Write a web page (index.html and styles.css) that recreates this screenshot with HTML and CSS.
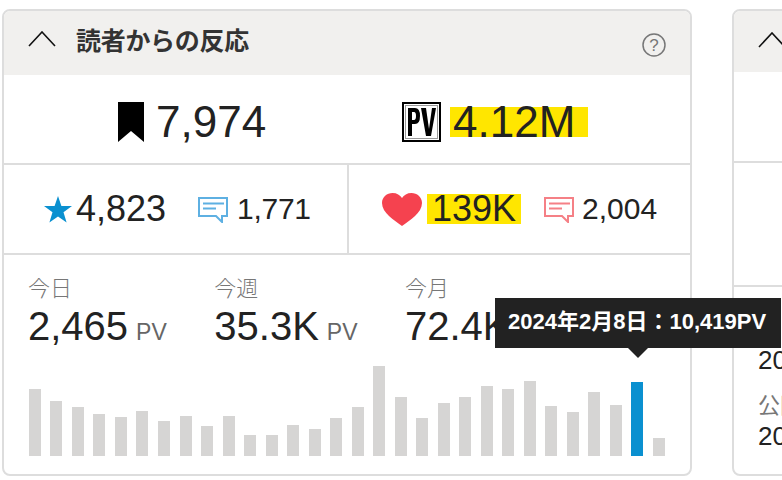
FILE: index.html
```html
<!DOCTYPE html>
<html lang="ja">
<head>
<meta charset="utf-8">
<title>読者からの反応</title>
<link rel="stylesheet" href="styles.css">
</head>
<body>
<div class="page">
  <section class="card">
    <header class="head">
      <svg class="chev" width="28" height="16" viewBox="0 0 28 16"><path d="M1 15 14 1l13 14" fill="none" stroke="#111" stroke-width="1.6"/></svg>
      <h2 class="title">読者からの反応</h2>
      <svg class="help" width="24" height="24" viewBox="0 0 24 24"><circle cx="12" cy="12" r="11" fill="none" stroke="#777" stroke-width="1.5"/><text x="12" y="18" text-anchor="middle" class="help-q">?</text></svg>
    </header>
    <div class="row-main">
      <div class="group">
        <svg width="26" height="40" viewBox="0 0 26 40"><path d="M0 0h26v40L13 29 0 40z" fill="#000"/></svg>
        <span class="num-xl">7,974</span>
      </div>
      <div class="group group-pv">
        <svg class="pv" width="39" height="40" viewBox="0 0 39 40"><rect x="1" y="1" width="37" height="38" fill="#fff" stroke="#000" stroke-width="2"/><rect x="3.5" y="3.5" width="32" height="33" fill="none" stroke="#999" stroke-width="1"/><path d="M6 6v28h4V22h3q5 0 5-8t-5-8zm4 4h2q2 0 2 4t-2 4h-2zM19 6l5 28h5l5-28h-4l-3 21-3-21z" fill="#000"/></svg>
        <span class="num-xl mark mark-xl">4.12M</span>
      </div>
    </div>
    <div class="row-sub">
      <div class="cell cell-left">
        <svg width="28" height="27" viewBox="0 0 28 27"><path d="M14 0l3.4 9.9H28l-8.5 6.400 3.1 10.300L14 20.500l-8.600 6.100 3.100-10.300L0 9.900h10.600z" fill="#0a90d0"/></svg>
        <span class="num-l">4,823</span>
        <svg class="bubble" width="30" height="26" viewBox="0 0 30 26"><path d="M1 1h28v18h-5v6l-6-6H1z" fill="#fff" stroke="#5eb0e2" stroke-width="2"/><path d="M5 6.500h21M5 11.500h13" stroke="#5eb0e2" stroke-width="1.800"/></svg>
        <span class="num-m num-narrow">1,771</span>
      </div>
      <div class="cell cell-right">
        <svg width="40" height="33" viewBox="0 0 40 33"><path d="M20 33C12 27 0 20 0 10 0 4 5 0 10.500 0 15 0 18 2 20 5c2-3 5-5 9.500-5C35 0 40 4 40 10c0 10-12 17-20 23z" fill="#f5424f"/></svg>
        <span class="num-l mark mark-l">139K</span>
        <svg class="bubble" width="30" height="26" viewBox="0 0 30 26"><path d="M1 1h28v18h-5v6l-6-6H1z" fill="#fff" stroke="#f58086" stroke-width="2"/><path d="M5 6.500h21M5 11.500h13" stroke="#f58086" stroke-width="1.800"/></svg>
        <span class="num-m">2,004</span>
      </div>
    </div>
    <div class="row-stats">
      <div class="stats">
        <div><div class="label">今日</div><div class="stat">2,465<small>PV</small></div></div>
        <div><div class="label">今週</div><div class="stat">35.3K<small>PV</small></div></div>
        <div><div class="label">今月</div><div class="stat">72.4K<small>PV</small></div></div>
      </div>
      <div class="bars">
        <i style="height:67px"></i><i style="height:55px"></i><i style="height:49px"></i><i style="height:42px"></i><i style="height:39px"></i><i style="height:45px"></i><i style="height:35px"></i><i style="height:40px"></i><i style="height:30px"></i><i style="height:40px"></i><i style="height:21px"></i><i style="height:21px"></i><i style="height:31px"></i><i style="height:27px"></i><i style="height:38px"></i><i style="height:49px"></i><i style="height:90px"></i><i style="height:59px"></i><i style="height:38px"></i><i style="height:53px"></i><i style="height:59px"></i><i style="height:70px"></i><i style="height:67px"></i><i style="height:75px"></i><i style="height:50px"></i><i style="height:44px"></i><i style="height:64px"></i><i style="height:51px"></i><i class="on" style="height:74px"></i><i style="height:18px"></i>
      </div>
    </div>
    <div class="tip">2024年2月8日：10,419PV</div>
  </section>
  <section class="card card-side">
    <header class="head head-side">
      <svg class="chev" width="28" height="16" viewBox="0 0 28 16"><path d="M1 15 14 1l13 14" fill="none" stroke="#111" stroke-width="1.6"/></svg>
    </header>
    <div class="side-a"></div>
    <div class="side-b"></div>
    <div class="side-c">
      <div class="side-val">2024</div>
      <div class="side-label">公開</div>
      <div class="side-val">2024</div>
    </div>
  </section>
</div>
</body>
</html>
```
FILE: styles.css
```css
html, body { margin: 0; padding: 0; background: #fff; }
body { width: 782px; height: 480px; overflow: hidden; font-family: "Liberation Sans", "Noto Sans CJK JP", sans-serif; color: #222; }
.page { display: flex; gap: 40px; padding: 9px 0 0 2px; width: 1500px; align-items: flex-start; }
.card { position: relative; flex: 0 0 auto; width: 690px; height: 467px; box-sizing: border-box; border: 2px solid #ddd; border-radius: 8px; }
.head { height: 64px; background: #f1f0ee; display: flex; align-items: center; padding: 0 24px 6px 24px; box-sizing: border-box; border-radius: 6px 6px 0 0; }
.chev { flex: none; margin-top: -2px; }
.head-side .chev { margin-top: -4px; }
.title { margin: -2px 0 0 20px; font-size: 25px; letter-spacing: -0.3px; font-weight: 700; color: #333; flex: 1; font-family: "Noto Sans CJK JP", sans-serif; line-height: 30px; }
.help { margin-top: 10px; }
.help-q { font-size: 17px; fill: #777; font-family: "Liberation Sans", sans-serif; }
.row-main { height: 90px; box-sizing: border-box; border-bottom: 2px solid #ddd; display: flex; gap: 136px; padding: 6px 0 0 114px; align-items: center; }
.group { display: flex; align-items: center; gap: 12px; }
.group-pv { gap: 9px; }
.num-xl { font-size: 44px; line-height: 40px; }
.mark { background: #ffe600; display: inline-block; }
.mark-xl { line-height: 30px; padding: 0 13px 0 3px; }
.num-l { font-size: 36px; line-height: 40px; }
.mark-l { line-height: 30px; padding: 0 5px; }
.num-m { font-size: 30px; line-height: 40px; }
.num-narrow { letter-spacing: -0.3px; }
.row-sub { height: 90px; box-sizing: border-box; border-bottom: 2px solid #ddd; display: flex; }
.cell { display: flex; align-items: center; box-sizing: border-box; }
.cell-left { width: 345px; border-right: 2px solid #ddd; padding-left: 40px; gap: 4px; }
.cell-right { padding-left: 33px; gap: 5px; }
.bubble { margin-top: 2px; }
.cell-left .bubble { margin-left: 28px; margin-right: 5px; }
.cell-right .bubble { margin-left: 18px; margin-right: 3px; }
.row-stats { padding: 18px 25px 0; }
.stats { display: flex; gap: 47.5px; margin-left: -1px; }
.label { font-size: 22px; line-height: 26px; margin-bottom: 2px; color: #777; font-family: "Noto Sans CJK JP", sans-serif; font-weight: 300; }
.stat { font-size: 40px; line-height: 50px; white-space: nowrap; }
.stat small { font-size: 23px; color: #666; margin-left: 8px; }
.bars { margin: 9px -0.02px 0 -0.12px; height: 90px; display: flex; align-items: flex-end; justify-content: space-between; }
.bars i { display: block; width: 12px; background: #d6d5d4; }
.bars i.on { background: #0a90d0; }
.tip { position: absolute; z-index: 2; left: 491px; top: 287px; height: 50px; width: 286px; box-sizing: border-box; padding-left: 13px; background: #222; color: #fff; font-size: 22px; font-weight: 700; line-height: 48px; white-space: nowrap; }
.tip::after { content: ""; position: absolute; left: 133px; top: 50px; border: 10px solid transparent; border-top-color: #222; border-bottom: 0; }
.head-side { height: 61px; padding-bottom: 0; }
.side-a { height: 89px; border-bottom: 2px solid #ddd; }
.side-b { height: 122px; border-bottom: 2px solid #ddd; }
.side-c { padding: 59px 24px 0; }
.side-val { font-size: 26px; line-height: 28px; }
.side-label { font-size: 22px; color: #777; line-height: 26px; margin: 16px 0 6px; font-family: "Noto Sans CJK JP", sans-serif; }
```
